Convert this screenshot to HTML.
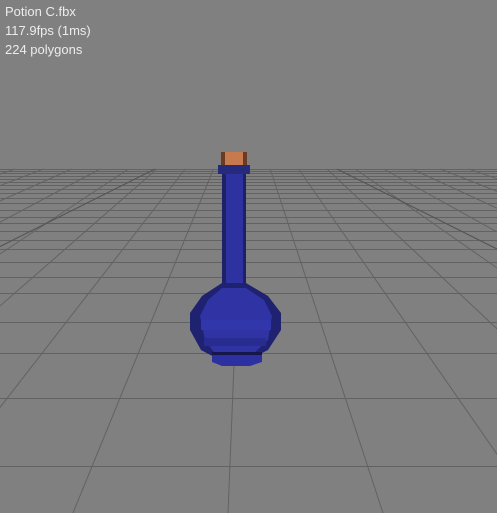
<!DOCTYPE html>
<html><head><style>
html,body{margin:0;padding:0;width:497px;height:513px;overflow:hidden;background:#808080}
svg{position:absolute;left:0;top:0}
.t{position:absolute;left:5px;color:#ececec;font:13px "Liberation Sans",sans-serif;line-height:19px}
</style></head><body>
<svg width="497" height="513" viewBox="0 0 497 513">
<rect width="497" height="513" fill="#808080"/>
<g id="g" stroke="#626262" stroke-width="1" fill="none"></g>
<line x1="155" y1="169" x2="0" y2="246.5" stroke="#555" stroke-width="1.2"/>
<line x1="337" y1="169" x2="497" y2="249" stroke="#555" stroke-width="1.2"/>
<!-- bottle -->
<rect x="221" y="152" width="26" height="13" fill="#c67a4e"/>
<rect x="221" y="152" width="4" height="13" fill="#6b3a22"/>
<rect x="243" y="152" width="4" height="13" fill="#6b3a22"/>
<rect x="218" y="165" width="32" height="9" fill="#262a7a"/>
<rect x="222" y="174" width="24" height="115" fill="#2e32a0"/>
<rect x="222" y="174" width="4" height="115" fill="#1e2166"/>
<rect x="243" y="174" width="3" height="115" fill="#1e2166"/>
<polygon points="222,283 246,283 268,296 281,313 281,330 268,350 252,358 216,358 201,350 190,330 190,313 202,296" fill="#1f2270"/>
<polygon points="222,288 246,288 264,300 272,316 268,340 252,355 216,355 205,340 200,316 208,300" fill="#2f33a3"/>
<rect x="201" y="320" width="70" height="10" fill="#3236ab"/>
<rect x="204" y="338" width="62" height="8" fill="#282c90"/>
<polygon points="212,352 262,352 262,362 250,366 222,366 212,362" fill="#2c30a0"/>
<rect x="212" y="352" width="50" height="3" fill="#15174a"/>
</svg>
<div class="t" style="top:2px">Potion C.fbx<br>117.9fps (1ms)<br>224 polygons</div>
<script>
var g=document.getElementById('g'),s='';
var ys=[169,171,173,176,179,182,185,189,193,198,203,210,217,223,231,240,249,262,277,293,322,353,398,466];
ys.forEach(function(y){s+='<line x1="0" x2="497" y1="'+(y+0.5)+'" y2="'+(y+0.5)+'"/>';});
for(var j=-30;j<=30;j++){var off=j*155-17;var x1=245+off*(169-92)/421,x2=245+off*(513-92)/421;s+='<line x1="'+x1+'" y1="169" x2="'+x2+'" y2="513"/>';}
g.innerHTML=s;
</script>
</body></html>
